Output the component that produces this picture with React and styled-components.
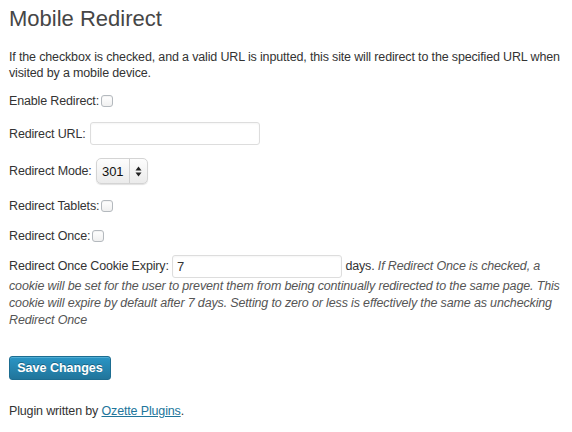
import React from "react";
import styled, { createGlobalStyle } from "styled-components";

const GlobalStyle = createGlobalStyle`
  body {
    margin: 0;
    background: #ffffff;
    font-family: "Liberation Sans", Arial, sans-serif;
    font-size: 12.5px;
    letter-spacing: -0.15px;
    color: #333333;
  }
`;

const Wrap = styled.div`
  padding: 4px 9px 0 9px;
`;

const Title = styled.h2`
  margin: 0;
  font-size: 22px;
  line-height: 29px;
  letter-spacing: 0;
  font-weight: normal;
  color: #464646;
`;

const Intro = styled.p`
  margin: 16px 0 0 0;
  line-height: 16px;
`;

const Row = styled.div`
  display: flex;
  align-items: center;
  gap: ${(p) => p.gap || 2}px;
  margin-top: ${(p) => p.top}px;
  height: ${(p) => p.h || 17}px;
`;

const Check = styled.input.attrs({ type: "checkbox" })`
  appearance: none;
  margin: 0;
  width: 12px;
  height: 12px;
  border: 1px solid #b4b9be;
  border-radius: 3px;
  background: linear-gradient(#ffffff, #f0f0f0);
  box-shadow: inset 0 1px 1px rgba(0, 0, 0, 0.05);
`;

const TextInput = styled.input.attrs({ type: "text" })`
  box-sizing: border-box;
  width: 170px;
  height: 23px;
  margin: 0;
  padding: 2px 4px;
  border: 1px solid #dddddd;
  border-radius: 3px;
  font-family: inherit;
  font-size: 13px;
  color: #333;
  box-shadow: inset 0 1px 2px rgba(0, 0, 0, 0.04);
  vertical-align: middle;
  outline: none;
`;

const SelectBox = styled.div`
  box-sizing: border-box;
  display: flex;
  align-items: stretch;
  width: 52px;
  height: 26px;
  border-radius: 5px;
  border: 1px solid #d4d4d4;
  background: linear-gradient(#fdfdfd, #ebebeb);
  box-shadow: 0 1px 1px rgba(0, 0, 0, 0.12);
`;

const SelectValue = styled.span`
  flex: 1;
  display: flex;
  align-items: center;
  justify-content: center;
  color: #111;
  font-size: 13px;
`;

const SelectArrows = styled.span`
  width: 17px;
  display: flex;
  align-items: center;
  justify-content: center;
  border-left: 1px solid #d0d0d0;
`;

const Expiry = styled.p`
  margin: 11px 0 0 0;
  line-height: 17px;
`;

const Note = styled.em`
  color: #555;
`;

const Button = styled.button`
  display: block;
  margin-top: 27px;
  box-sizing: border-box;
  width: 102px;
  height: 24px;
  padding: 0;
  border: 1px solid #1d6d91;
  border-radius: 3px;
  background: linear-gradient(#2a95c5, #21759b);
  box-shadow: inset 0 1px 0 rgba(120, 200, 230, 0.5);
  color: #fff;
  font-family: inherit;
  font-weight: bold;
  font-size: 12.5px;
  letter-spacing: 0;
  text-shadow: 0 -1px 0 rgba(0, 0, 0, 0.3);
`;

const Footer = styled.p`
  margin: 23px 0 0 0;
  line-height: 17px;
`;

const Link = styled.a`
  color: #21759b;
  text-decoration: underline;
`;

export default function App() {
  return (
    <>
      <GlobalStyle />
      <Wrap>
        <Title>Mobile Redirect</Title>
        <Intro>
          If the checkbox is checked, and a valid URL is inputted, this site will redirect to the specified URL when
          visited by a mobile device.
        </Intro>
        <Row top={11}>
          <span>Enable Redirect:</span>
          <Check />
        </Row>
        <Row top={13} h={23} gap={4}>
          <span>Redirect URL:</span>
          <TextInput />
        </Row>
        <Row top={13} h={26} gap={4}>
          <span>Redirect Mode:</span>
          <SelectBox>
            <SelectValue>301</SelectValue>
            <SelectArrows>
              <svg width="7" height="11" viewBox="0 0 7 11">
                <path d="M3.5 0.5 L6.5 4.5 L0.5 4.5 Z M3.5 10.5 L6.5 6.5 L0.5 6.5 Z" fill="#222" />
              </svg>
            </SelectArrows>
          </SelectBox>
        </Row>
        <Row top={13}>
          <span>Redirect Tablets:</span>
          <Check />
        </Row>
        <Row top={13}>
          <span>Redirect Once:</span>
          <Check />
        </Row>
        <Expiry>
          Redirect Once Cookie Expiry: <TextInput defaultValue="7" /> days.{" "}
          <Note>
            If Redirect Once is checked, a cookie will be set for the user to prevent them from being continually
            redirected to the same page. This cookie will expire by default after 7 days. Setting to zero or less is
            effectively the same as unchecking Redirect Once
          </Note>
        </Expiry>
        <Button>Save Changes</Button>
        <Footer>
          Plugin written by <Link href="#">Ozette Plugins</Link>.
        </Footer>
      </Wrap>
    </>
  );
}
